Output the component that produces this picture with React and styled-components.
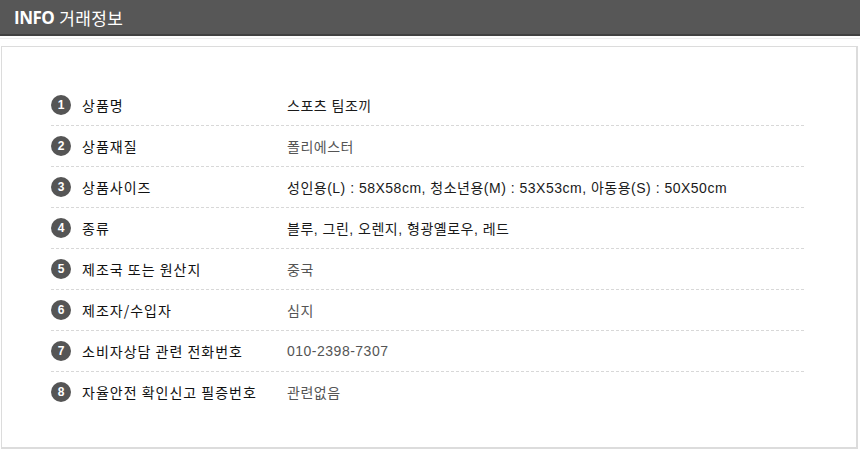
import { createGlobalStyle, styled } from 'styled-components'

const GlobalStyle = createGlobalStyle`
  html, body {
    margin: 0;
    padding: 0;
    background: #ffffff;
  }
  body {
    font-family: 'Noto Sans CJK KR', 'Noto Sans', sans-serif;
  }
`

const StyledPage = styled.div`
  width: 860px;
  height: 451px;
  background: #fff;
  overflow: hidden;
`

const StyledHeader = styled.div`
  height: 34px;
  background: #575757;
  border-bottom: 2px solid #414141;
  display: flex;
  align-items: center;
  padding-left: 14px;
  color: #fff;
  font-size: 17px;
  line-height: 1;
`

const StyledHeaderStrong = styled.span`
  font-family: 'Open Sans', 'Noto Sans', sans-serif;
  font-weight: 700;
  letter-spacing: -0.5px;
  margin-right: 5px;
`

const StyledHeaderText = styled.span`
  font-weight: 400;
  letter-spacing: 0.3px;
`

const StyledTopLine = styled.div`
  margin-top: 2px;
  height: 1px;
  background: #efefef;
`

const StyledBox = styled.div`
  margin: 7px 2px 0 1px;
  height: 403px;
  box-sizing: border-box;
  border: 1px solid #dcdcdc;
  border-right-width: 2px;
  border-bottom-width: 2px;
  padding: 38px 52px 0 49px;
`

const StyledList = styled.ul`
  list-style: none;
  margin: 0;
  padding: 0;
`

const StyledRow = styled.li`
  display: flex;
  align-items: center;
  height: 40px;
  border-bottom: 1px dashed #d8d8d8;
  &:last-child {
    border-bottom: none;
  }
`

const StyledNum = styled.span`
  width: 20px;
  height: 20px;
  border-radius: 50%;
  background: #555;
  color: #fff;
  font-family: 'Liberation Sans', Arial, sans-serif;
  font-weight: 700;
  font-size: 12px;
  display: flex;
  align-items: center;
  justify-content: center;
  flex-shrink: 0;
`

const StyledLabel = styled.span`
  width: 205px;
  padding-left: 11px;
  color: #111;
  font-size: 14px;
  letter-spacing: 1px;
`

const StyledValue = styled.span`
  font-family: 'Liberation Sans', 'Noto Sans CJK KR', sans-serif;
  color: ${(props) => (props.$dark ? '#1a1a1a' : '#555')};
  font-size: 14px;
  letter-spacing: 0.5px;
`

const rows = [
  ['상품명', '스포츠 팀조끼', true],
  ['상품재질', '폴리에스터', false],
  ['상품사이즈', '성인용(L) : 58X58cm, 청소년용(M) : 53X53cm, 아동용(S) : 50X50cm', true],
  ['종류', '블루, 그린, 오렌지, 형광옐로우, 레드', true],
  ['제조국 또는 원산지', '중국', false],
  ['제조자/수입자', '심지', false],
  ['소비자상담 관련 전화번호', '010-2398-7307', false],
  ['자율안전 확인신고 필증번호', '관련없음', false],
]

export default function App() {
  return (
    <StyledPage>
      <GlobalStyle />
      <StyledHeader>
        <StyledHeaderStrong>INFO</StyledHeaderStrong>
        <StyledHeaderText>거래정보</StyledHeaderText>
      </StyledHeader>
      <StyledTopLine />
      <StyledBox>
        <StyledList>
          {rows.map(([label, value, dark], i) => (
            <StyledRow key={label}>
              <StyledNum>{i + 1}</StyledNum>
              <StyledLabel>{label}</StyledLabel>
              <StyledValue $dark={dark}>{value}</StyledValue>
            </StyledRow>
          ))}
        </StyledList>
      </StyledBox>
    </StyledPage>
  )
}
